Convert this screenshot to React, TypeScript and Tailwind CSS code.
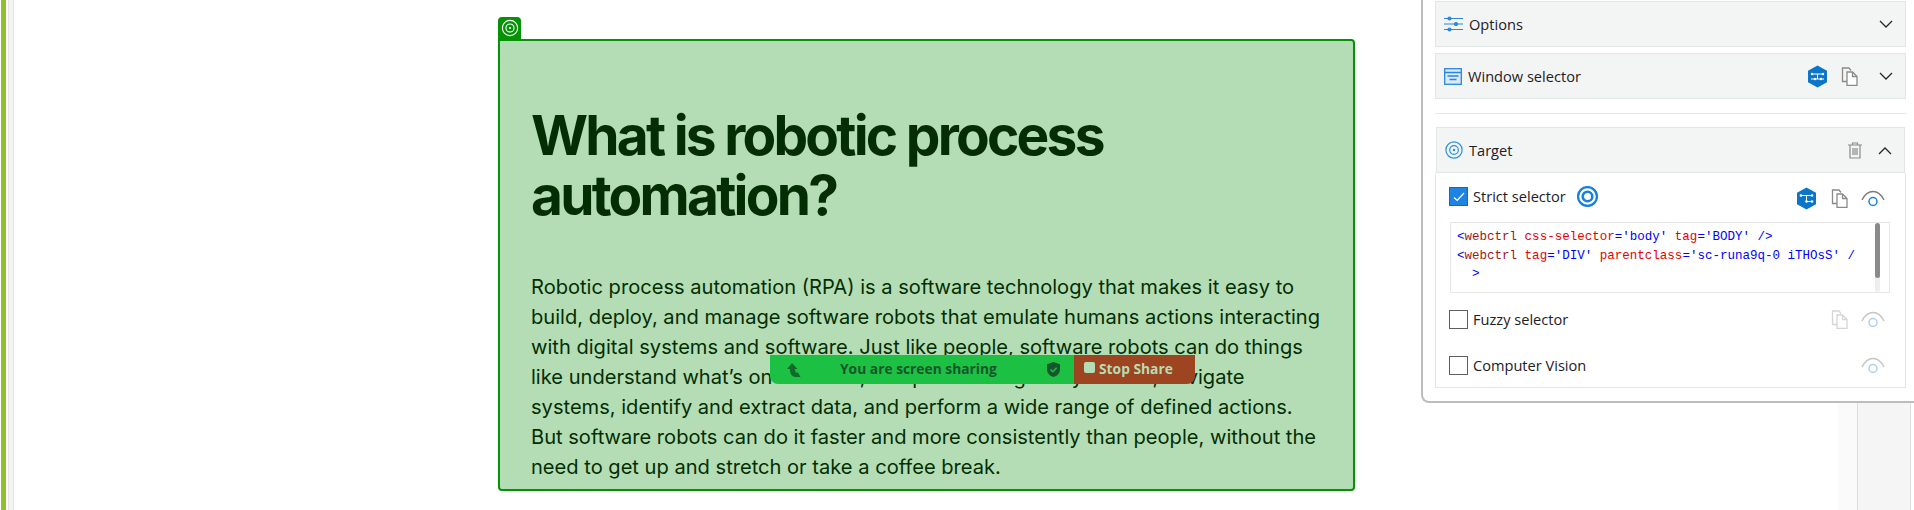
import React from 'react';

const panelFont = "font-['Open_Sans','Noto_Sans',sans-serif]";

const Chevron: React.FC<{ up?: boolean }> = ({ up }) => (
  <svg width="14" height="9" viewBox="0 0 14 9" fill="none" stroke="#26282a" strokeWidth="1.3">
    <path d={up ? 'M1 8l6-6 6 6' : 'M1 1l6 6 6-6'} />
  </svg>
);

const CopyIcon: React.FC<{ faded?: boolean }> = ({ faded }) => (
  <svg width="18" height="19" viewBox="0 0 18 19" fill="none" stroke={faded ? '#d5d5d5' : '#8a8a8a'} strokeWidth="1.3">
    <path d="M6 14.5H1.5V1h6.5l2 2.5" />
    <path d="M6 5h5.5l4.5 4.5v9H6z" fill="#fff" />
    <path d="M11.5 5v4.5H16" />
  </svg>
);

const EyeIcon: React.FC<{ faded?: boolean }> = ({ faded }) => (
  <svg width="24" height="17" viewBox="0 0 24 17" fill="none" strokeWidth="1.4">
    <path d="M1 10C4 4 8 1.500 12 1.500s8 2.500 11 8.500" stroke={faded ? '#c4c4c4' : '#7b7b7b'} />
    <circle cx="12" cy="11.500" r="4" stroke={faded ? '#a8d0f2' : '#1b80dd'} strokeWidth="1.5" />
  </svg>
);

const HexIcon: React.FC<{ tree?: boolean }> = ({ tree }) => (
  <svg width="21" height="23" viewBox="0 0 21 23">
    <path d="M10.500 0.500l9.500 5.200v11.600l-9.500 5.200L1 17.300V5.700z" fill="#0a75c9" />
    {tree ? (
      <g fill="#fff">
        <path d="M5 8.500h11M10.500 8.500v6M10.500 14.500H16" stroke="#fff" strokeWidth="1" />
        <circle cx="5" cy="8.500" r="1.300" />
        <circle cx="16" cy="8.500" r="1.300" />
        <circle cx="10.500" cy="14.500" r="1.300" />
        <circle cx="16" cy="14.500" r="1.300" />
      </g>
    ) : (
      <g fill="#fff">
        <path d="M4 9h13M4 14h13M10.500 9v5" stroke="#fff" strokeWidth="1" />
        <circle cx="5" cy="9" r="1.200" />
        <circle cx="16" cy="9" r="1.200" />
        <circle cx="8" cy="14" r="1.200" />
        <circle cx="14" cy="14" r="1.200" />
      </g>
    )}
  </svg>
);

const RingsIcon: React.FC<{ size: number; heavy?: boolean }> = ({ size, heavy }) => (
  <svg width={size} height={size} viewBox="0 0 20 20" fill="none" stroke={heavy ? '#1580e0' : '#2a8fe6'}>
    <circle cx="10" cy="10" r="9" strokeWidth={heavy ? 2.2 : 1.3} />
    <circle cx="10" cy="10" r={heavy ? 4.6 : 4.8} strokeWidth={heavy ? 2.4 : 1.3} />
    {!heavy && <circle cx="10" cy="10" r="1.4" fill="#2a8fe6" stroke="none" />}
  </svg>
);

const Checkbox: React.FC<{ checked?: boolean }> = ({ checked }) =>
  checked ? (
    <div className="flex h-[19px] w-[19px] items-center justify-center border border-[#1668bd] bg-[#1d84e3]">
      <svg width="12" height="10" viewBox="0 0 12 10" fill="none" stroke="#fff" strokeWidth="1.2">
        <path d="M1 5.5l3.2 3L11 1" />
      </svg>
    </div>
  ) : (
    <div className="h-[19px] w-[19px] border border-[#5f5f5f] bg-white" />
  );

const SectionHeader: React.FC<{ icon: React.ReactNode; title: string; children: React.ReactNode; className: string }> = ({
  icon,
  title,
  children,
  className,
}) => (
  <div className={`flex items-center border border-[#e3e6e6] bg-[#f3f5f5] ${className}`}>
    {icon}
    <span className="pt-px text-[14.6px] text-[#1e2024]">{title}</span>
    <div className="ml-auto flex items-center">{children}</div>
  </div>
);

const Tok: React.FC<{ c: 'b' | 'n' | 'a'; children: React.ReactNode }> = ({ c, children }) => {
  const color = c === 'b' ? 'text-[#0000ff]' : c === 'n' ? 'text-[#a31515]' : 'text-[#e50000]';
  return <span className={color}>{children}</span>;
};

const SelectorPanel: React.FC = () => (
  <aside
    className={`absolute left-[1421px] right-0 top-0 h-[403px] rounded-bl-lg border-b-2 border-l-2 border-[#bdbdbd] bg-white pl-[12px] pr-[8px] pt-px ${panelFont}`}
  >
    <SectionHeader
      className="h-[46px] pl-[8px] pr-[12px]"
      title="Options"
      icon={
        <svg className="mr-[6px]" width="19" height="16" viewBox="0 0 19 16" fill="none" stroke="#2a86dc" strokeWidth="1.2">
          <path d="M0 2.5h19M0 8h19M0 13.5h19" />
          <circle cx="5.5" cy="2.5" r="1.5" fill="#2a86dc" />
          <circle cx="12" cy="8" r="1.5" fill="#2a86dc" />
          <circle cx="5.5" cy="13.5" r="1.5" fill="#2a86dc" />
        </svg>
      }
    >
      <Chevron />
    </SectionHeader>

    <SectionHeader
      className="mt-[6px] h-[46px] pl-[8px] pr-[12px]"
      title="Window selector"
      icon={
        <svg className="mr-[6px]" width="18" height="17" viewBox="0 0 18 17" fill="#dbeafa" stroke="#2a86dc" strokeWidth="1.3">
          <rect x="0.7" y="0.7" width="16.6" height="15.6" />
          <path d="M1 4.5h16M3.5 8h11M5.5 11.5h7" fill="none" />
        </svg>
      }
    >
      <HexIcon />
      <span className="ml-[13px] mr-[20px]">
        <CopyIcon />
      </span>
      <Chevron />
    </SectionHeader>

    <div className="mt-[14px] h-px bg-[#e8e8e8]" />

    <SectionHeader
      className="mt-[13px] ml-px mr-px h-[46px] pl-[8px] pr-[12px]"
      title="Target"
      icon={
        <span className="mr-[6px]">
          <RingsIcon size={18} />
        </span>
      }
    >
      <svg className="mr-[16px]" width="14" height="17" viewBox="0 0 14 17" fill="none" stroke="#8a8a8a" strokeWidth="1.2">
        <path d="M0 3h14M4.5 3V1h5v2M2 3v13h10V3M5 6v7M7 6v7M9 6v7" />
      </svg>
      <Chevron up />
    </SectionHeader>

    <div className="h-[215px] border border-t-0 border-[#e3e6e6] pl-[13px] pr-[14px]">
      <div className="flex h-[49px] items-center pb-[2px] pr-[6px]">
        <Checkbox checked />
        <span className="ml-[5px] pt-px text-[14.6px] text-[#1e2024]">Strict selector</span>
        <span className="ml-[11px]">
          <RingsIcon size={21} heavy />
        </span>
        <div className="ml-auto flex items-center gap-[14px] pt-[3px]">
          <HexIcon tree />
          <CopyIcon />
          <span className="ml-[-2px]">
            <EyeIcon />
          </span>
        </div>
      </div>

      <div className="relative ml-px mr-px h-[71px] border border-[#e6e6e6] pl-[6px] pt-[5px] font-['Liberation_Mono',monospace] text-[12.53px] leading-[18.5px]">
        <div className="whitespace-pre">
          <Tok c="b">&lt;</Tok>
          <Tok c="n">webctrl</Tok> <Tok c="a">css-selector</Tok>
          <Tok c="b">='body'</Tok> <Tok c="a">tag</Tok>
          <Tok c="b">='BODY' /&gt;</Tok>
        </div>
        <div className="whitespace-pre">
          <Tok c="b">&lt;</Tok>
          <Tok c="n">webctrl</Tok> <Tok c="a">tag</Tok>
          <Tok c="b">='DIV'</Tok> <Tok c="a">parentclass</Tok>
          <Tok c="b">='sc-runa9q-0 iTHOsS' /</Tok>
        </div>
        <div className="whitespace-pre">
          <Tok c="b">{'  >'}</Tok>
        </div>
        <div className="absolute bottom-0 right-[9px] top-0 w-[5px] rounded-full bg-[#eeeeee]">
          <div className="h-[55px] rounded-full bg-[#8a8a8a]" />
        </div>
      </div>

      <div className="mt-[16px] flex h-[20px] items-center pr-[6px]">
        <Checkbox />
        <span className="ml-[5px] pt-px text-[14.6px] text-[#1e2024]">Fuzzy selector</span>
        <div className="ml-auto flex items-center gap-[12px]">
          <CopyIcon faded />
          <EyeIcon faded />
        </div>
      </div>

      <div className="mt-[26px] flex h-[20px] items-center pr-[6px]">
        <Checkbox />
        <span className="ml-[5px] pt-px text-[14.6px] text-[#1e2024]">Computer Vision</span>
        <div className="ml-auto">
          <EyeIcon faded />
        </div>
      </div>
    </div>
  </aside>
);

const ShareBar: React.FC = () => (
  <div className="absolute left-[770px] top-[355px] flex h-[29px] w-[425px] overflow-hidden rounded-b-lg font-['Open_Sans',sans-serif] text-[13.8px] font-bold">
    <div className="flex w-[304px] items-center whitespace-nowrap bg-[#1cc042] pl-[17px] text-[#17562c]">
      <svg className="shrink-0" width="14" height="14" viewBox="0 0 14 14" fill="#0f6b2c">
        <path d="M5 0L0 6h3v2c0 3 2 5.500 5 6h5.500L11 9.500H8.500L8 6h2.500z" />
      </svg>
      <span className="ml-[39px] w-[160px] shrink-0">You are screen sharing</span>
      <svg className="ml-[47px] shrink-0" width="13" height="15" viewBox="0 0 13 15">
        <path d="M6.500 0L13 2.200v5c0 4-3 6.800-6.500 7.800C3 14 0 11.200 0 7.200v-5z" fill="#17562c" />
        <path d="M3.500 7.500l2.200 2.200 4-4" fill="none" stroke="#1cc042" strokeWidth="1.5" />
      </svg>
    </div>
    <div className="flex flex-1 items-center whitespace-nowrap bg-[#9c4520] pl-[10px] text-[#b5ddb5]">
      <div className="mb-[5px] h-[11px] w-[11px] shrink-0 rounded-[2px] bg-[#b5ddb5]" />
      <span className="ml-[4px]">Stop Share</span>
    </div>
  </div>
);

export default function App() {
  return (
    <div className="relative flex h-[510px] w-full overflow-hidden bg-white">
      <div className="ml-px h-full w-[5px] bg-[#92c02c]" />
      <div className="ml-[2px] h-full w-[6px] border-x border-[#e2e2e2] bg-[#f4f4f4]" />

      <main className="relative flex-1 pl-[484px] pt-[17px]">
        <div className="flex h-[22px] w-[23px] items-center justify-center rounded-t-[4px] bg-[#069206]">
          <svg width="18" height="18" viewBox="0 0 20 20" fill="none" stroke="#fff" strokeWidth="1.2">
            <circle cx="10" cy="10" r="8.500" />
            <circle cx="10" cy="10" r="4.500" />
            <circle cx="10" cy="10" r="1.200" fill="#fff" stroke="none" />
          </svg>
        </div>
        <section className="h-[452px] w-[857px] rounded-[4px] rounded-tl-none border-2 border-[#069206] bg-[#b5ddb5] pl-[31px] pt-[64px] font-['Inter',sans-serif] text-[#032e03]">
          <h1 className="w-[700px] text-[55px] font-bold leading-[60px] tracking-[-2.75px]">What is robotic process automation?</h1>
          <p className="mt-[47px] w-[793px] text-[20.1px] leading-[30px]">
            Robotic process automation (RPA) is a software technology that makes it easy to build, deploy, and manage
            software robots that emulate humans actions interacting with digital systems and software. Just like people,
            software robots can do things like understand what’s on a screen, complete the right keystrokes, navigate
            systems, identify and extract data, and perform a wide range of defined actions. But software robots can do
            it faster and more consistently than people, without the need to get up and stretch or take a coffee break.
          </p>
        </section>
      </main>

      <div className="h-full w-[19px] bg-[#fafafa]" />
      <div className="h-full w-[54px] border-x border-[#dedede] bg-[#f5f5f5]" />
      <div className="h-full w-[3px]" />

      <ShareBar />
      <SelectorPanel />
    </div>
  );
}
